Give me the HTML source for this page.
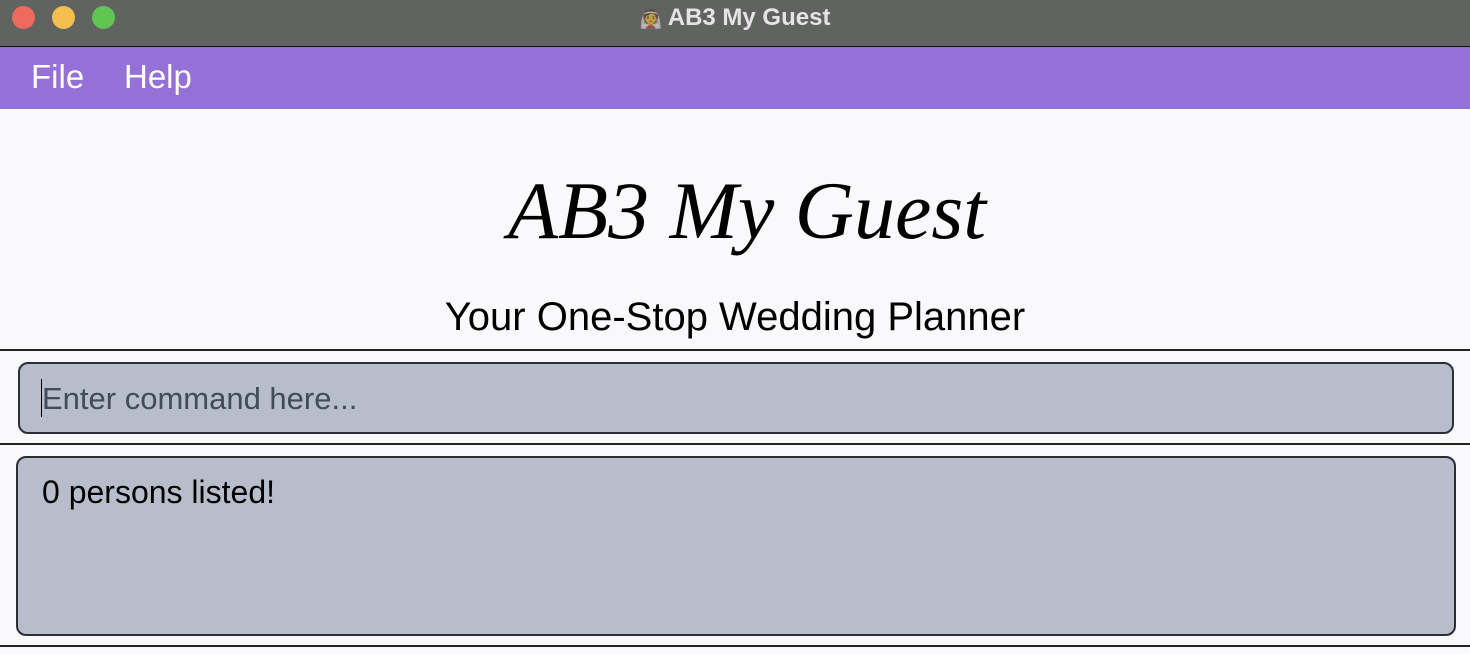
<!DOCTYPE html>
<html><head><style>
body{margin:0;width:1470px;height:654px;background:#f9f9fb;font-family:"Liberation Sans",sans-serif;position:relative;overflow:hidden}
.tb{position:absolute;left:0;top:0;width:1470px;height:46px;background:#616361;border-bottom:1px solid #111}
.dot{position:absolute;top:6px;width:23px;height:23px;border-radius:50%}
.tt{position:absolute;left:0;width:1470px;top:4px;text-align:center;color:#e4e4e4;font-weight:bold;font-size:24px}
.mb{position:absolute;left:0;top:47px;width:1470px;height:62px;background:#9570d6;color:#fff;font-size:33px}
.mb span{position:absolute;top:11px}
.h1{position:absolute;left:0;width:1470px;top:164px;text-align:center;font-family:"Liberation Serif",serif;font-style:italic;font-size:82px;color:#000;padding-left:24px;box-sizing:border-box}
.h2{position:absolute;left:0;width:1470px;top:295px;text-align:center;font-size:40px;color:#000}
.line{position:absolute;left:0;width:1470px;height:2px;background:#222}
.box{position:absolute;background:#b7bdca;border:2px solid #2a2e36;border-radius:10px;box-sizing:border-box}
</style></head><body>
<div class="tb">
<div class="dot" style="left:12px;background:#ee6a5e"></div>
<div class="dot" style="left:52px;background:#f5bf4f"></div>
<div class="dot" style="left:92px;background:#61c554"></div>
<div class="tt"><span style="font-size:18px;opacity:.6">👰</span> AB3 My Guest</div>
</div>
<div class="mb"><span style="left:31px">File</span><span style="left:124px">Help</span></div>
<div class="h1">AB3 My Guest</div>
<div class="h2">Your One-Stop Wedding Planner</div>
<div class="line" style="top:349px"></div>
<div class="box" style="left:18px;top:362px;width:1436px;height:72px">
<div style="position:absolute;left:21px;top:15px;width:1px;height:38px;background:#000"></div>
<div style="position:absolute;left:22px;top:17px;font-size:31px;color:#434a5a">Enter command here...</div>
</div>
<div class="line" style="top:443px"></div>
<div class="box" style="left:16px;top:456px;width:1440px;height:180px">
<div style="position:absolute;left:24px;top:16px;font-size:32px;color:#000">0 persons listed!</div>
</div>
<div class="line" style="top:645px"></div>
</body></html>
